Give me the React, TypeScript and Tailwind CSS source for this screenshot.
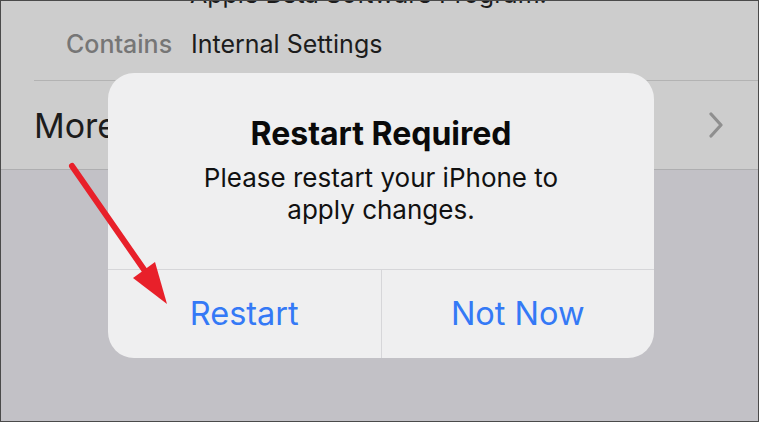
export default function App() {
  return (
    <div
      className="relative w-[759px] h-[422px] overflow-hidden border border-[#4a4a4a] bg-[#c2c1c6]"
      style={{ fontFamily: 'Inter, "Noto Sans", sans-serif' }}
    >
      {/* settings list behind the dimmed alert */}
      <div className="bg-[#cdcdcd] border-b border-[#aeaeb0]">
        <div className="h-[79px] pl-[65px] flex flex-col">
          <div className="-mt-[22px] pl-[124px] text-[25px] leading-[30px] text-[#1c1c1c] whitespace-nowrap">
            Apple Beta Software Program.
          </div>
          <div className="flex mt-[20px] text-[25px] leading-[30px]">
            <span className="w-[125px] text-[#767676] font-medium">Contains</span>
            <span className="text-[#1c1c1c]">Internal Settings</span>
          </div>
        </div>
        <div className="ml-[33px] h-[1px] bg-[#b3b3b3]" />
        <div className="h-[88px] pl-[33px] pr-[33px] flex items-center justify-between">
          <span className="text-[34px] leading-[40px] text-[#1c1c1c] pt-[1px]">More</span>
          <svg width="16" height="26" viewBox="0 0 16 26" className="mr-[1px]">
            <path d="M3 2 L13 13 L3 24" fill="none" stroke="#8f8f8f" strokeWidth="3.2" strokeLinecap="round" strokeLinejoin="round" />
          </svg>
        </div>
      </div>

      {/* alert */}
      <div className="absolute left-[107px] top-[72px] w-[546px] h-[285px] rounded-[26px] bg-[#efeff0] flex flex-col overflow-hidden">
        <div className="flex-1 flex flex-col items-center pt-[42px]">
          <div className="text-[32px] leading-[38px] font-bold text-[#0a0a0a]">Restart Required</div>
          <div className="mt-[9px] text-[26px] leading-[32px] text-[#111] text-center w-[400px]">
            Please restart your iPhone to apply changes.
          </div>
        </div>
        <div className="h-[1px] bg-[#d6d6d9]" />
        <div className="h-[88px] flex">
          <button className="flex-1 flex items-center justify-center text-[32.5px] text-[#3479f6]">Restart</button>
          <div className="w-[1px] bg-[#d6d6d9]" />
          <button className="flex-1 flex items-center justify-center text-[32.5px] text-[#3479f6]">Not Now</button>
        </div>
      </div>

      {/* annotation arrow */}
      <svg className="absolute left-0 top-0" width="759" height="422" viewBox="0 0 759 422">
        <line x1="71" y1="165" x2="144" y2="270" stroke="#e8202a" strokeWidth="6" strokeLinecap="round" />
        <polygon points="166,303 132,277 154,261" fill="#e8202a" />
      </svg>
    </div>
  );
}
